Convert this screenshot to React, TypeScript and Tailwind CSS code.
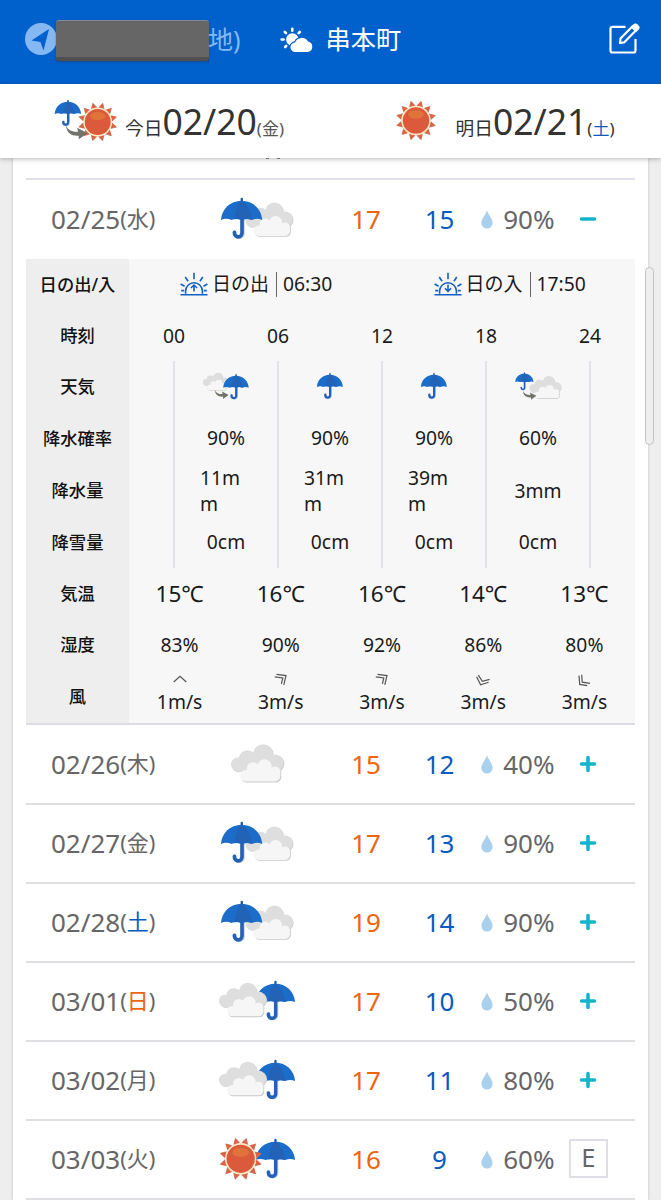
import type { ReactNode } from "react";

type IconKind = "umbrellaCloud" | "cloud" | "cloudUmbrella" | "sunUmbrella";

type Day = {
  date: string;
  week: string;
  weekColor?: string;
  icon: IconKind;
  high: number;
  low: number;
  rain: string;
  mark: "minus" | "plus" | "grade";
};

const OPEN_DAY: Day = {
  date: "02/25",
  week: "水",
  icon: "umbrellaCloud",
  high: 17,
  low: 15,
  rain: "90%",
  mark: "minus",
};

const DAYS: Day[] = [
  { date: "02/26", week: "木", icon: "cloud", high: 15, low: 12, rain: "40%", mark: "plus" },
  { date: "02/27", week: "金", icon: "umbrellaCloud", high: 17, low: 13, rain: "90%", mark: "plus" },
  { date: "02/28", week: "土", weekColor: "text-[#0a5bc0]", icon: "umbrellaCloud", high: 19, low: 14, rain: "90%", mark: "plus" },
  { date: "03/01", week: "日", weekColor: "text-[#ee6510]", icon: "cloudUmbrella", high: 17, low: 10, rain: "50%", mark: "plus" },
  { date: "03/02", week: "月", icon: "cloudUmbrella", high: 17, low: 11, rain: "80%", mark: "plus" },
  { date: "03/03", week: "火", icon: "sunUmbrella", high: 16, low: 9, rain: "60%", mark: "grade" },
];

const HOURS = ["00", "06", "12", "18", "24"];
const TEMPS = ["15℃", "16℃", "16℃", "14℃", "13℃"];
const HUMIDITY = ["83%", "90%", "92%", "86%", "80%"];
const WINDS = [
  { speed: "1m/s", d: "M3.7 10 10 4.3 16.3 10" },
  { speed: "3m/s", d: "M5.5 2.3 15 3.6 12.8 12.8M3.8 4.8 11.8 6 10.4 11.8" },
  { speed: "3m/s", d: "M5.5 2.3 15 3.6 12.8 12.8M3.8 4.8 11.8 6 10.4 11.8" },
  { speed: "3m/s", d: "M3.6 4.8 7.6 12.8 15.6 10.2M5.3 3.2 9.4 9.4 16.6 7.4" },
  { speed: "3m/s", d: "M5 3.6 5.7 12.4 13.2 13.7M7.7 2.8 8.2 10.2 16 11.3" },
];

/* ---- weather glyphs, each drawn in its own local box ---- */

// 42 x 41
function Umbrella({ x = 0, y = 0, s = 1 }: { x?: number; y?: number; s?: number }) {
  return (
    <g transform={`translate(${x} ${y}) scale(${s})`}>
      <path d="M22 21v14.8a4 4 0 0 1-8 0v-1" fill="none" stroke="#c3d3e8" strokeWidth="3.6" strokeLinecap="round" />
      <path d="M20.8 1.4v4" stroke="#2459a8" strokeWidth="2.4" strokeLinecap="round" />
      <path d="M21 20v15.5a3.8 3.8 0 0 1-7.6 0v-.8" fill="none" stroke="#2460b4" strokeWidth="3.6" strokeLinecap="round" />
      <path
        d="M0 22.4C.6 11.6 9 3.2 20.6 3.2S40.6 11.6 41.2 22.4Q36 20 31 22.4 26 20.4 20.8 22.6 15.6 20.4 10.4 22.4 5 20 0 22.4Z"
        fill="#1c6dca"
      />
      <path d="M20.6 3.2C16.8 6 14 12.5 13.6 21.6Q17 20.7 20.8 22.6 25.5 20.4 31 22.4C30.5 13 25.5 5.5 20.6 3.2Z" fill="#2263b8" />
    </g>
  );
}

// 53 x 39
function Cloud({ x = 0, y = 0, s = 1 }: { x?: number; y?: number; s?: number }) {
  return (
    <g transform={`translate(${x} ${y}) scale(${s})`}>
      <g fill="#cfcfcf" transform="translate(.8 .8)">
        <circle cx="7" cy="20.5" r="7" />
        <circle cx="16.5" cy="15" r="8.7" />
        <circle cx="32" cy="10" r="9.8" />
        <circle cx="44" cy="19" r="8.6" />
      </g>
      <g fill="#dedede">
        <circle cx="7" cy="20.5" r="7" />
        <circle cx="16.5" cy="15" r="8.7" />
        <circle cx="32" cy="10" r="9.8" />
        <circle cx="44" cy="19" r="8.6" />
        <path d="M7 27.5h38V14H16Z" />
      </g>
      <g fill="#c9c9c9" transform="translate(.9 1)">
        <rect x="9" y="26" width="40.5" height="11.5" rx="5.7" />
        <circle cx="45" cy="28" r="4.5" />
      </g>
      <g fill="#f6f6f6">
        <rect x="9" y="26" width="40.5" height="11.5" rx="5.7" />
        <circle cx="22" cy="24.5" r="6.3" />
        <circle cx="33.5" cy="22.5" r="7.2" />
        <circle cx="44" cy="28" r="5.5" />
        <path d="M14 30h30v-5H20Z" />
      </g>
    </g>
  );
}

// centred on cx / cy, outer radius about 22
function Sun({ cx, cy, s = 1 }: { cx: number; cy: number; s?: number }) {
  return (
    <g transform={`translate(${cx} ${cy}) scale(${s})`}>
      {Array.from({ length: 12 }, (_, i) => (
        <g key={i} transform={`rotate(${i * 30 + 15})`}>
          <path d="M-2.5-15.5 .6-21.4 3.900-15.500Z" fill="#a8958a" />
          <path d="M-3.6-15.5 0-22.2 3-15.5Z" fill="#df6245" />
        </g>
      ))}
      <circle r="16" fill="#fbe9c4" />
      <circle r="14.4" fill="#dc5a3c" />
      <ellipse cy="-6.5" rx="8.5" ry="4.6" fill="#e0733a" />
    </g>
  );
}

function TurnArrow({ x, y, s = 1 }: { x: number; y: number; s?: number }) {
  return (
    <path
      transform={`translate(${x} ${y}) scale(${s})`}
      d="M0 0C2 4.8 6.5 6.4 11.8 6.2L11 2.2 21 7.6 12.5 13.6V10C6 10.6.6 7.6 0 0Z"
      fill="#73726b"
    />
  );
}

function DayIcon({ kind }: { kind: IconKind }) {
  return (
    <svg width="76" height="44" viewBox="0 0 76 44" aria-hidden>
      {kind === "umbrellaCloud" && (
        <>
          <Cloud x={26.5} y={5.2} s={0.9} />
          <Umbrella x={2} y={0.6} />
        </>
      )}
      {kind === "cloud" && <Cloud x={12} y={2} />}
      {kind === "cloudUmbrella" && (
        <>
          <Umbrella x={36.5} y={1.6} s={0.96} />
          <Cloud x={0} y={3.5} s={0.9} />
        </>
      )}
      {kind === "sunUmbrella" && (
        <>
          <Umbrella x={36.5} y={1.6} s={0.96} />
          <Sun cx={21.7} cy={21.8} s={0.98} />
        </>
      )}
    </svg>
  );
}

function HorizonIcon({ down }: { down?: boolean }) {
  return (
    <svg width="28" height="25" viewBox="0 0 28 25" fill="none" stroke="#1560c4" strokeWidth="1.6" aria-hidden>
      <path d="M.5 22.8H27.5M5.6 21.8v-2.6a8.4 8.4 0 0 1 16.8 0v2.6" />
      <path d="M14 .8v6.4M5.2 5l2.9 4.3M22.8 5l-2.9 4.3M.6 12l4 2.2M27.4 12l-4 2.2M1.2 18.6h3M26.8 18.6h-3" />
      {down ? <path d="M14 12.5v6.5M10.9 16.3 14 19.3l3.1-3" /> : <path d="M14 19.5V13M10.9 16 14 13l3.1 3" />}
    </svg>
  );
}

function Drop() {
  return (
    <svg width="12" height="19" viewBox="0 0 12 19" aria-hidden>
      <path d="M6 .3C7 4.4 11.6 8.5 11.6 13A5.6 5.6 0 0 1 .4 13C.4 8.5 5 4.4 6 .3Z" fill="#a9d0ee" />
    </svg>
  );
}

function Mark({ mark }: { mark: Day["mark"] }) {
  if (mark === "grade") {
    return (
      <span className="flex h-[39px] w-[39px] items-center justify-center border-2 border-[#dfdfe6] pb-0.5 text-[25.5px] leading-none text-[#666]">
        E
      </span>
    );
  }
  return (
    <svg width="18" height="18" viewBox="0 0 18 18" stroke="#14b5cb" strokeWidth="3.6" strokeLinecap="round" aria-hidden>
      <path d={mark === "plus" ? "M2.5 9H15.5M9 2.5V15.5" : "M2.5 9H15.5"} />
    </svg>
  );
}

function DayRow({ day }: { day: Day }) {
  return (
    <div className="flex h-[77px] items-center text-[26px] text-[#666]">
      <div className="flex w-[189px] shrink-0 items-center pb-0.5 pl-[25px] leading-none">
        <span>{day.date}</span>
        <span className="pb-px text-[22px]">
          (<span className={day.weekColor}>{day.week}</span>)
        </span>
      </div>
      <div className="flex w-[84px] shrink-0 justify-center pb-0.5">
        <DayIcon kind={day.icon} />
      </div>
      <div className="ml-[30px] w-[74px] shrink-0 text-center text-[#ee6510]">{day.high}</div>
      <div className="w-[73px] shrink-0 text-center text-[#0a5bc0]">{day.low}</div>
      <div className="flex w-[78.500px] shrink-0 items-center justify-between pl-[5px]">
        <Drop />
        <span>{day.rain}</span>
      </div>
      <div className="flex flex-1 items-center justify-center pr-[13px] pb-0.5">
        <Mark mark={day.mark} />
      </div>
    </div>
  );
}

function Label({ children }: { children: ReactNode }) {
  return (
    <div className="flex w-[103px] shrink-0 items-center justify-center bg-[#eeeeee] pt-px text-[17.3px] font-medium whitespace-nowrap text-[#111]">
      {children}
    </div>
  );
}

// one row whose four cells sit between the six-hour rules
function SpanRow({ label, cells }: { label: string; cells: ReactNode[] }) {
  return (
    <div className="flex flex-1">
      <Label>{label}</Label>
      <div className="flex flex-1 pl-[44px]">
        {cells.map((cell, i) => (
          <div
            key={i}
            className="flex w-[104px] shrink-0 items-center justify-center border-l-2 border-[#e0e1ed] pt-px last:w-[106px] last:border-r-2"
          >
            {cell}
          </div>
        ))}
      </div>
    </div>
  );
}

function PointRow({ label, cells }: { label: string; cells: ReactNode[] }) {
  return (
    <div className="flex flex-1">
      <Label>{label}</Label>
      <div className="grid flex-1 grid-cols-5 items-center pt-0.5 text-center">
        {cells.map((cell, i) => (
          <div key={i}>{cell}</div>
        ))}
      </div>
    </div>
  );
}

function RainAmount({ children }: { children: string }) {
  return <span className="max-w-[52px] leading-[26px] break-all">{children}</span>;
}

function SmallUmbrella() {
  return (
    <svg className="mb-0.5" width="28" height="28" viewBox="0 0 28 28" aria-hidden>
      <Umbrella x={0.9} y={0.8} s={0.63} />
    </svg>
  );
}

function Detail() {
  return (
    <div className="flex h-[466px] flex-col border-b-2 border-[#dcdce4] bg-[#f7f7f8] text-[19.3px] text-[#1a1a1a]">
      <div className="flex flex-1">
        <Label>日の出/入</Label>
        <div className="flex flex-1 items-center pl-[51px]">
          {[
            { name: "日の出", time: "06:30", down: false },
            { name: "日の入", time: "17:50", down: true },
          ].map((s) => (
            <div key={s.name} className="flex w-[253.500px] shrink-0 items-center">
              <HorizonIcon down={s.down} />
              <span className="ml-1 w-[65px] border-r border-[#666] text-[19px] leading-[25px] whitespace-nowrap">
                {s.name}
              </span>
              <span className="ml-[6px]">{s.time}</span>
            </div>
          ))}
        </div>
      </div>
      <div className="flex flex-1">
        <Label>時刻</Label>
        <div className="-ml-[7px] flex items-center pt-0.5">
          {HOURS.map((h) => (
            <div key={h} className="w-[104px] text-center">
              {h}
            </div>
          ))}
        </div>
      </div>
      <SpanRow
        label="天気"
        cells={[
          <svg key="a" className="mb-0.5" width="47" height="28" viewBox="0 0 47 28" aria-hidden>
            <Cloud x={0} y={0.6} s={0.47} />
            <Umbrella x={20.2} y={1.8} s={0.62} />
            <TurnArrow x={11.8} y={18} s={0.66} />
          </svg>,
          <SmallUmbrella key="b" />,
          <SmallUmbrella key="c" />,
          <svg key="d" className="mb-0.5" width="47" height="28" viewBox="0 0 47 28" aria-hidden>
            <Cloud x={14.5} y={3.8} s={0.6} />
            <Umbrella x={0.3} y={0.2} s={0.44} />
            <TurnArrow x={8} y={19} s={0.64} />
          </svg>,
        ]}
      />
      <SpanRow label="降水確率" cells={["90%", "90%", "90%", "60%"]} />
      <SpanRow
        label="降水量"
        cells={["11mm", "31mm", "39mm", "3mm"].map((v) => (
          <RainAmount key={v}>{v}</RainAmount>
        ))}
      />
      <SpanRow label="降雪量" cells={["0cm", "0cm", "0cm", "0cm"]} />
      <PointRow
        label="気温"
        cells={TEMPS.map((t, i) => (
          <span key={i} className="text-[22.5px]">
            {t}
          </span>
        ))}
      />
      <PointRow label="湿度" cells={HUMIDITY} />
      <PointRow
        label="風"
        cells={WINDS.map((w, i) => (
          <div key={i} className="flex flex-col items-center pb-1.5">
            <svg width="20" height="15" viewBox="0 0 20 15" fill="none" stroke="#555" strokeWidth="1.2" aria-hidden>
              <path d={w.d} />
            </svg>
            <span className="leading-[30px]">{w.speed}</span>
          </div>
        ))}
      />
    </div>
  );
}

function Header() {
  return (
    <header className="flex h-[84px] shrink-0 items-center bg-[#0060cc] pb-1">
      <svg className="mb-0.5 ml-[25px] shrink-0" width="32" height="32" viewBox="0 0 32 32" aria-hidden>
        <circle cx="16" cy="16" r="16" fill="#85b8f2" />
        <path d="M24 6 6.5 17.5 15.5 19 18.5 27.5Z" fill="#0060cc" />
      </svg>
      <div className="-ml-px h-[41px] w-[153px] shrink-0 rounded-[3px] border-t border-b-4 border-t-[#7f8a96] border-b-[#505050] bg-[#666] shadow-[0_1px_2px_rgba(40,50,70,0.5)]" />
      <span className="-ml-px text-[25px] whitespace-nowrap text-[#85b8f2]">地)</span>
      <svg className="ml-[39px] shrink-0" width="34" height="26" viewBox="0 0 34 26" aria-hidden>
        <g stroke="#fff" strokeWidth="2.6" strokeLinecap="round">
          <path d="M12.3 1.8v2M4.8 5l1.2 1.2M1.6 12.5h2M5.2 20l1-1M19.8 5l-1.2 1.2M22.5 12h.1" />
        </g>
        <circle cx="12.3" cy="12.5" r="6.2" fill="#fff" />
        <path
          d="M15.5 25A4.8 4.8 0 0 1 15 15.4 7.2 7.2 0 0 1 28 14.6 5.3 5.3 0 0 1 28 25Z"
          fill="#fff"
          stroke="#0060cc"
          strokeWidth="2.2"
          paintOrder="stroke"
        />
      </svg>
      <span className="ml-3 text-[25.2px] whitespace-nowrap text-white">串本町</span>
      <svg className="mr-[20px] mb-[3px] ml-auto shrink-0" width="33" height="33" viewBox="0 0 33 33" fill="none" stroke="#fff" strokeWidth="2.2" aria-hidden>
        <path d="M17.5 4.8H4.5A2 2 0 0 0 2.5 6.8V28.5a2 2 0 0 0 2 2H25.500a2 2 0 0 0 2-2V17" />
        <path d="M12.5 16.5 24.8 4 28.6 7.8 16.3 20.3 12 21Z" strokeLinejoin="round" />
        <path d="M23.5 5.2 26 2.7a2 2 0 0 1 3 0l1.4 1.4a2 2 0 0 1 0 3L28 9.5Z" fill="#fff" strokeWidth="1.2" />
      </svg>
    </header>
  );
}

function DateBar() {
  return (
    <div className="relative z-10 flex h-[74px] shrink-0 bg-white text-[#333] shadow-[0_1px_5px_rgba(0,0,0,0.28)]">
      <div className="flex w-[330px] shrink-0 items-center pl-[54px]">
        <svg className="shrink-0" width="64" height="46" viewBox="0 0 64 46" aria-hidden>
          <Sun cx={43.7} cy={24} s={0.9} />
          <Umbrella x={0.7} y={1.6} s={0.64} />
          <TurnArrow x={12} y={27.5} s={1.02} />
        </svg>
        <div className="ml-[7px] flex items-baseline pt-px leading-none whitespace-nowrap">
          <span className="text-[18.7px]">今日</span>
          <span className="text-[35.5px]">02/20</span>
          <span className="text-[17px] text-[#555]">(金)</span>
        </div>
      </div>
      <div className="flex flex-1 items-center pl-[64px]">
        <svg className="shrink-0" width="44" height="46" viewBox="0 0 44 46" aria-hidden>
          <Sun cx={22} cy={22.5} s={0.92} />
        </svg>
        <div className="ml-[17.500px] flex items-baseline pt-px leading-none whitespace-nowrap">
          <span className="text-[18.7px]">明日</span>
          <span className="text-[35.5px]">02/21</span>
          <span className="text-[17px]">
            (<span className="text-[#0a5bc0]">土</span>)
          </span>
        </div>
      </div>
    </div>
  );
}

export default function App() {
  return (
    <div
      lang="ja"
      className="relative flex h-[1200px] w-[661px] flex-col overflow-hidden bg-[#eeeeee] font-['Noto_Sans','Noto_Sans_CJK_JP',sans-serif] font-normal"
    >
      <Header />
      <DateBar />
      <main className="ml-[13px] h-[1042px] w-[635px] bg-white px-[13px] shadow-[0_0_3px_rgba(0,0,0,0.2)]">
        <div className="flex h-[22px] w-[609px] items-start gap-[8px] border-b-2 border-[#e0e0ea] pl-[240px]">
          <span className="h-[1px] w-[3px] bg-[#888]" />
          <span className="h-[1px] w-[3px] bg-[#888]" />
        </div>
        <div className="w-[609px]">
          <div className="py-px">
            <DayRow day={OPEN_DAY} />
          </div>
          <Detail />
          <div>
            {DAYS.map((day) => (
              <div key={day.date} className="border-b-2 border-[#e0e0e4] first:pt-px">
                <DayRow day={day} />
              </div>
            ))}
          </div>
        </div>
      </main>
      <div className="absolute top-[267px] left-[645px] z-20 h-[178px] w-[9px] rounded-full border border-[#c4c4c6] bg-[#eeeeef]" />
    </div>
  );
}
